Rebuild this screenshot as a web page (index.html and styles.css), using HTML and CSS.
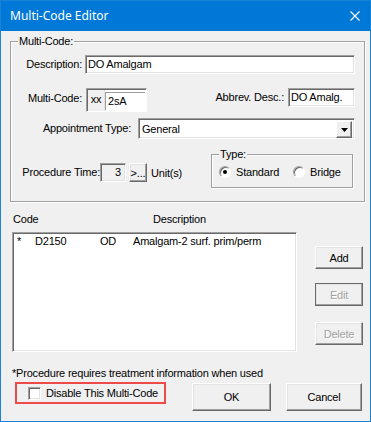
FILE: index.html
```html
<!DOCTYPE html>
<html lang="en">
<head>
  <meta charset="UTF-8">
  <title>Multi-Code Editor</title>
  <link rel="stylesheet" href="styles.css">
</head>
<body>
  <div class="window">
    <div class="titlebar">
      <span class="title">Multi-Code Editor</span>
      <svg class="close" width="10" height="10" viewBox="0 0 10 10">
        <path d="M0.5 0.5 L9.5 9.5 M9.5 0.5 L0.5 9.5" stroke="#fff" stroke-width="1.1" fill="none"/>
      </svg>
    </div>

    <div class="content">
      <!-- Multi-Code group -->
      <div class="group main-group">
        <span class="group-title">Multi-Code:</span>

        <div class="row row-desc">
          <span class="lbl lbl-desc">Description:</span>
          <div class="field field-desc">DO Amalgam</div>
        </div>

        <div class="row row-code">
          <span class="lbl lbl-code">Multi-Code:</span>
          <div class="code-box">
            <span class="prefix">xx</span>
            <span class="code-input">2sA</span>
          </div>
          <span class="lbl lbl-abbrev">Abbrev. Desc.:</span>
          <div class="field field-abbrev">DO Amalg.</div>
        </div>

        <div class="row row-appt">
          <span class="lbl lbl-appt">Appointment Type:</span>
          <div class="field combo">
            <span class="combo-text">General</span>
            <span class="combo-btn">
              <svg width="7" height="4" viewBox="0 0 7 4"><path d="M0 0 H7 L3.5 4 Z" fill="#000"/></svg>
            </span>
          </div>
        </div>

        <div class="row row-time">
          <span class="lbl lbl-time">Procedure Time:</span>
          <div class="field field-time">3</div>
          <div class="btn btn-more">&gt;...</div>
          <span class="units">Unit(s)</span>

          <div class="group type-group">
            <span class="group-title">Type:</span>
            <span class="radio"><span class="radio-dot checked"></span>Standard</span>
            <span class="radio radio-bridge"><span class="radio-dot"></span>Bridge</span>
          </div>
        </div>
      </div>

      <!-- Code list -->
      <div class="list-head">
        <span class="head-code">Code</span>
        <span>Description</span>
      </div>
      <div class="list-area">
        <div class="listbox">
          <div class="list-row">
            <span class="col-star">*</span>
            <span class="col-code">D2150</span>
            <span class="col-surf">OD</span>
            <span>Amalgam-2 surf. prim/perm</span>
          </div>
        </div>
        <div class="side-btns">
          <div class="btn btn-side">Add</div>
          <div class="btn btn-side btn-edit disabled">Edit</div>
          <div class="btn btn-side btn-delete disabled">Delete</div>
        </div>
      </div>

      <p class="note">*Procedure requires treatment information when used</p>

      <div class="footer">
        <div class="disable-box">
          <span class="check"></span>
          <span>Disable This Multi-Code</span>
        </div>
        <div class="btn btn-ok">OK</div>
        <div class="btn btn-cancel">Cancel</div>
      </div>
    </div>
  </div>
</body>
</html>
```

FILE: styles.css
```css
* {
  box-sizing: border-box;
}

body {
  margin: 0;
  background: #f0f0f0;
  font-family: "Liberation Sans", Arial, sans-serif;
  font-size: 11px;
  letter-spacing: -0.2px;
  color: #000;
}

.window {
  width: 371px;
  height: 422px;
  border: 1px solid #1883d7;
  background: #f0f0f0;
}

.titlebar {
  height: 30px;
  background: #0078d7;
  color: #fff;
  display: flex;
  align-items: center;
  justify-content: space-between;
  padding: 0 10px 0 9px;
  font-family: "Noto Sans", sans-serif;
  font-size: 12px;
  letter-spacing: 0;
}

.title {
  margin-top: -1px;
}

/* group boxes */
.group {
  position: relative;
  border: 1px solid #a0a0a0;
  box-shadow: inset 1px 1px 0 #fff, 1px 1px 0 #fff;
}

.group-title {
  position: absolute;
  top: -7px;
  left: 7px;
  padding: 0 1px;
  background: #f0f0f0;
  line-height: 13px;
}

.main-group {
  margin: 10px 0 0 9px;
  width: 355px;
  height: 161px;
}

.row {
  display: flex;
  align-items: flex-start;
}

.lbl {
  text-align: right;
  white-space: nowrap;
}

/* sunken edit fields */
.field {
  background: #fff;
  border: 1px solid;
  border-color: #a0a0a0 #fff #fff #a0a0a0;
  box-shadow: inset 1px 1px 0 #696969, inset -1px -1px 0 #e3e3e3;
  padding-left: 2px;
  white-space: nowrap;
}

.row-desc {
  margin-top: 13px;
}

.lbl-desc {
  width: 71px;
  line-height: 19px;
}

.field-desc {
  margin-left: 3px;
  width: 270px;
  height: 19px;
  line-height: 17px;
}

.row-code {
  margin-top: 14px;
}

.lbl-code {
  width: 71px;
  line-height: 20px;
}

.code-box {
  display: flex;
  margin-left: 4px;
  width: 61px;
  height: 24px;
  background: #fff;
  border: 1px solid;
  border-color: #a0a0a0 #fff #fff #a0a0a0;
  box-shadow: inset 1px 1px 0 #696969;
  padding: 1px 0 0 1px;
}

.prefix {
  width: 17px;
  height: 21px;
  background: #f0f0f0;
  border-right: 1px solid #e3e3e3;
  text-align: center;
  line-height: 19px;
}

.code-input {
  width: 40px;
  height: 18px;
  margin-top: 2px;
  border-top: 1px solid #a0a0a0;
  border-left: 1px solid #a0a0a0;
  padding-left: 2px;
  line-height: 16px;
}

.lbl-abbrev {
  width: 137px;
  line-height: 19px;
}

.field-abbrev {
  margin-left: 4px;
  width: 67px;
  height: 19px;
  line-height: 17px;
}

.row-appt {
  margin-top: 6px;
}

.lbl-appt {
  width: 120px;
  line-height: 21px;
}

.combo {
  display: flex;
  justify-content: space-between;
  margin-left: 7px;
  width: 217px;
  height: 21px;
  padding: 1px 1px 1px 3px;
}

.combo-text {
  line-height: 19px;
}

.combo-btn {
  width: 16px;
  height: 17px;
  margin: 1px 1px 0 0;
  display: flex;
  align-items: center;
  justify-content: center;
  background: #f0f0f0;
  border: 1px solid;
  border-color: #fff #696969 #696969 #fff;
  box-shadow: inset -1px -1px 0 #a0a0a0;
}

.row-time {
  margin-top: 15px;
  height: 34px;
}

.lbl-time {
  width: 89px;
  line-height: 19px;
  margin-top: 9px;
}

.field-time {
  margin-top: 9px;
  width: 26px;
  height: 19px;
  line-height: 17px;
  text-align: right;
  padding-right: 4px;
  background: #f0f0f0;
}

/* raised buttons */
.btn {
  background: #f0f0f0;
  border: 1px solid;
  border-color: #fff #696969 #696969 #fff;
  box-shadow: inset -1px -1px 0 #a0a0a0, inset 1px 1px 0 #e3e3e3;
  display: flex;
  align-items: center;
  justify-content: center;
}

.btn.disabled {
  color: #a0a0a0;
  text-shadow: 1px 1px 0 #fff;
}

.btn-more {
  margin: 9px 0 0 3px;
  width: 18px;
  height: 19px;
}

.units {
  margin: 10px 0 0 4px;
  line-height: 19px;
}

.type-group {
  margin-left: auto;
  margin-right: 11px;
  width: 142px;
  height: 34px;
  display: flex;
  align-items: center;
  padding: 2px 0 0 7px;
}

.radio {
  display: flex;
  align-items: center;
}

.radio-bridge {
  margin-left: 14px;
}

.radio-dot {
  width: 12px;
  height: 12px;
  border-radius: 50%;
  background: #fff;
  border: 1px solid;
  border-color: #a0a0a0 #fff #fff #a0a0a0;
  box-shadow: inset 1px 1px 0 #696969;
  margin-right: 5px;
  position: relative;
}

.radio-dot.checked::after {
  content: "";
  position: absolute;
  left: 3px;
  top: 3px;
  width: 4px;
  height: 4px;
  border-radius: 50%;
  background: #000;
}

/* list */
.list-head {
  display: flex;
  margin-top: 11px;
  padding-left: 12px;
  line-height: 13px;
}

.head-code {
  width: 140px;
}

.list-area {
  display: flex;
  margin: 6px 0 0 11px;
}

.listbox {
  width: 285px;
  height: 120px;
  background: #fff;
  border: 1px solid;
  border-color: #a0a0a0 #fff #fff #a0a0a0;
  box-shadow: inset 1px 1px 0 #696969, inset -1px -1px 0 #e3e3e3;
  padding: 2px 0 0 4px;
}

.list-row {
  display: flex;
  line-height: 13px;
  white-space: nowrap;
}

.col-star {
  width: 18px;
}

.col-code {
  width: 65px;
}

.col-surf {
  width: 33px;
}

.side-btns {
  display: flex;
  flex-direction: column;
  margin-left: 18px;
}

.btn-side {
  width: 48px;
  height: 23px;
  margin-top: 14px;
}

.btn-edit {
  border-color: #696969;
}

.btn-delete {
  margin-top: 16px;
}

.note {
  margin: 15px 0 0 11px;
  line-height: 13px;
}

.footer {
  display: flex;
  align-items: flex-start;
  margin-top: 2px;
}

.disable-box {
  display: flex;
  align-items: center;
  margin-left: 14px;
  width: 151px;
  height: 22px;
  border: 2px solid #ef4a4a;
  padding-left: 11px;
}

.check {
  width: 13px;
  height: 13px;
  background: #fff;
  border: 1px solid;
  border-color: #a0a0a0 #fff #fff #a0a0a0;
  box-shadow: inset 1px 1px 0 #696969, inset -1px -1px 0 #e3e3e3;
  margin-right: 5px;
}

.btn-ok {
  margin: 1px 0 0 26px;
  width: 79px;
  height: 28px;
}

.btn-cancel {
  margin: 1px 0 0 15px;
  width: 76px;
  height: 28px;
}
```
